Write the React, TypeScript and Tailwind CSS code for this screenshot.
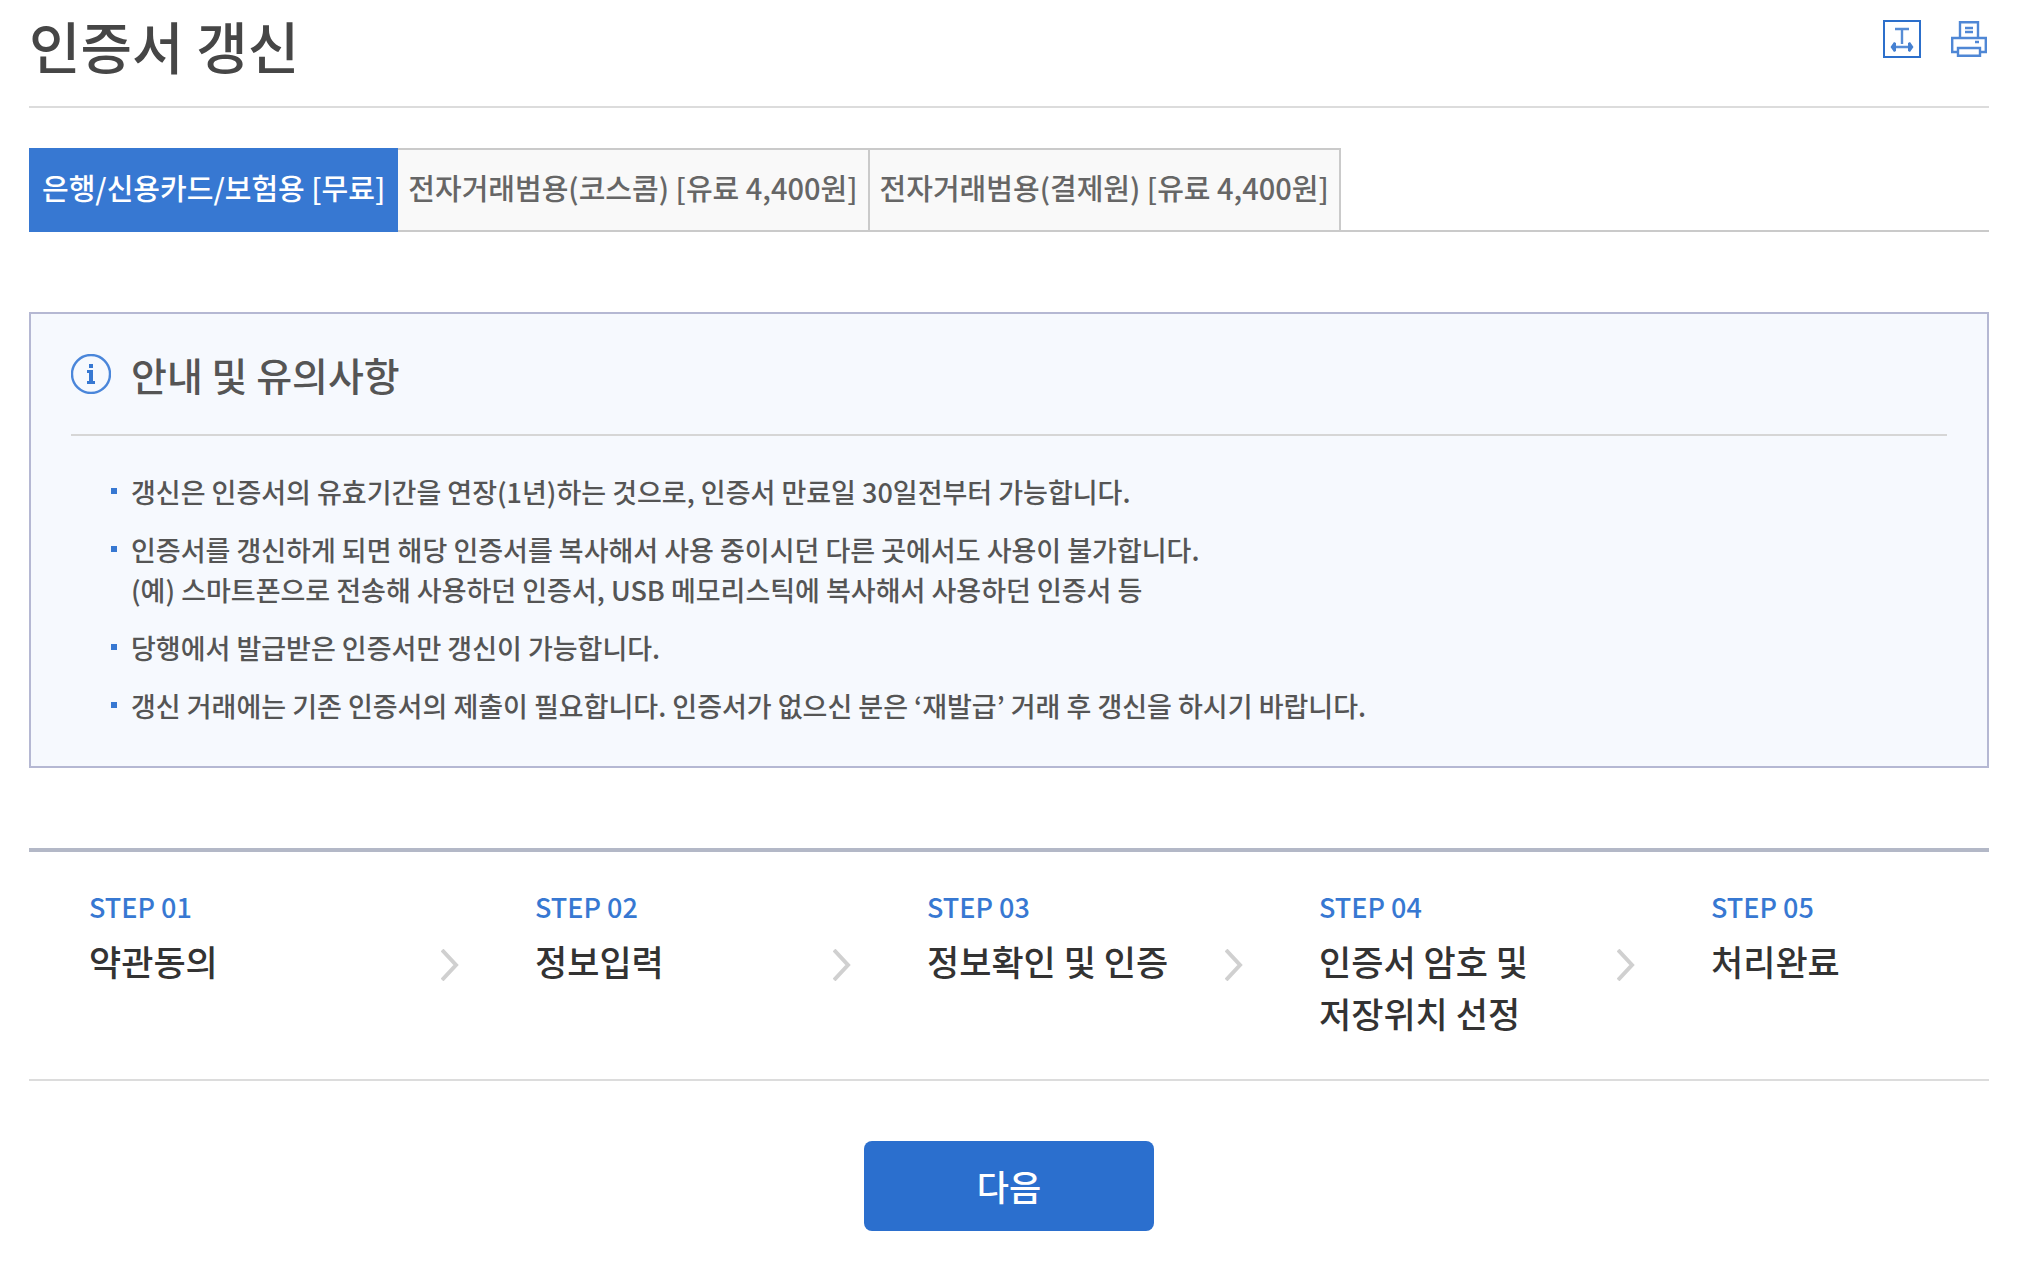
import {useState} from 'react';
import clsx from 'clsx';

const tabs = [
  '은행/신용카드/보험용 [무료]',
  '전자거래범용(코스콤) [유료 4,400원]',
  '전자거래범용(결제원) [유료 4,400원]',
];

const notices = [
  ['갱신은 인증서의 유효기간을 연장(1년)하는 것으로, 인증서 만료일 30일전부터 가능합니다.'],
  [
    '인증서를 갱신하게 되면 해당 인증서를 복사해서 사용 중이시던 다른 곳에서도 사용이 불가합니다.',
    '(예) 스마트폰으로 전송해 사용하던 인증서, USB 메모리스틱에 복사해서 사용하던 인증서 등',
  ],
  ['당행에서 발급받은 인증서만 갱신이 가능합니다.'],
  ['갱신 거래에는 기존 인증서의 제출이 필요합니다. 인증서가 없으신 분은 ‘재발급’ 거래 후 갱신을 하시기 바랍니다.'],
];

const steps = [
  {label: 'STEP 01', title: ['약관동의']},
  {label: 'STEP 02', title: ['정보입력']},
  {label: 'STEP 03', title: ['정보확인 및 인증']},
  {label: 'STEP 04', title: ['인증서 암호 및', '저장위치 선정']},
  {label: 'STEP 05', title: ['처리완료']},
];

const TextSizeIcon = () => (
  <svg width="38" height="38" viewBox="0 0 38 38" fill="none" stroke="#2c6fcb" aria-hidden="true">
    <rect x="1" y="1" width="36" height="36" strokeWidth="2" />
    <path d="M12 9h14M19 9v15M11 27h16" strokeWidth="2.4" opacity=".8" />
    <path d="M7.5 27l3.5-5 2 1v8l-2 1zM30.5 27l-3.5-5-2 1v8l2 1z" fill="#4580d1" stroke="none" />
  </svg>
);

const PrintIcon = () => (
  <svg width="36" height="36" viewBox="0 0 36 36" fill="none" stroke="#4f87d5" strokeWidth="2.4" aria-hidden="true">
    <path d="M9 16V1.2h18v15" />
    <path d="M6 31H1.2V17h33.6v14H30" />
    <path d="M7 27h22v7.8H7z" />
    <path d="M14 7h8M14 11h8M24 21h4" />
  </svg>
);

const InfoIcon = () => (
  <svg width="40" height="40" viewBox="0 0 40 40" aria-hidden="true">
    <circle cx="20" cy="20" r="19" fill="none" stroke="#4a86da" strokeWidth="2.4" />
    <path d="M18 10h4v4h-4zM16 16h6v11h2v3h-8v-3h2v-8h-2z" fill="#3778d2" />
  </svg>
);

const ArrowIcon = () => (
  <svg width="18" height="32" viewBox="0 0 18 32" fill="none" stroke="#d0d0d0" strokeWidth="4" className="shrink-0" aria-hidden="true">
    <path d="M1 1l14 15L1 31" />
  </svg>
);

export default function App() {
  const [active, setActive] = useState(0);

  return (
    <main className="bg-white pl-[29px] pr-[49px] pb-10 font-['Noto_Sans_CJK_KR',sans-serif] font-medium break-keep">
      <header className="flex items-start justify-between h-27 border-b-2 border-[#dcdcdc]">
        <h1 className="pt-[5px] text-[56px] leading-[80px] text-[#464646]">인증서 갱신</h1>
        <div className="flex items-center gap-[30px] pt-5 pr-0.5">
          <button type="button" aria-label="글자 크기"><TextSizeIcon /></button>
          <button type="button" aria-label="인쇄"><PrintIcon /></button>
        </div>
      </header>

      <div role="tablist" className="mt-10 flex h-21 border-b-2 border-[#cacaca]">
        {tabs.map((tab, index) => (
          <button
            key={tab}
            type="button"
            role="tab"
            aria-selected={active === index}
            onClick={() => setActive(index)}
            className={clsx(
              'h-21 border-y-2 pb-1 text-[29px] whitespace-nowrap',
              active === index
                ? 'border-[#3778d2] bg-[#3778d2] px-[13px] text-white'
                : 'border-r-2 border-[#cacaca] bg-[#f9f9f9] px-2.5 text-[#666]',
            )}
          >
            {tab}
          </button>
        ))}
      </div>

      <section className="mt-20 border-2 border-[#b5b8d3] bg-[#f6f9fe] p-10">
        <h2 className="flex items-center gap-5 h-[82px] pb-10 border-b-2 border-[#d6d6d6] text-[39px] text-[#555]">
          <InfoIcon />
          안내 및 유의사항
        </h2>
        <ul className="mt-9 ml-10 space-y-[18px] text-[27px] leading-10 text-[#555]">
          {notices.map((lines) => (
            <li key={lines[0]} className="flex gap-3.5">
              <span className="mt-4 size-1.5 shrink-0 bg-[#3778d2]" />
              <p>
                {lines.map((line) => (
                  <span key={line} className="block">{line}</span>
                ))}
              </p>
            </li>
          ))}
        </ul>
      </section>

      <ol className="mt-20 grid grid-cols-5 border-t-4 border-b-2 border-t-[#b3b8c7] border-b-[#dcdcdc] pt-[35px] pb-10">
        {steps.map((step, index) => (
          <li key={step.label} className={clsx('flex items-start', index === 0 ? 'pl-[60px]' : 'pl-5')}>
            {index > 0 && (
              <div className="mt-[62px] mr-[76px]">
                <ArrowIcon />
              </div>
            )}
            <div className="whitespace-nowrap">
              <p className="text-[27px] leading-10 text-[#3778d2]">{step.label}</p>
              <p className="mt-2 text-[35px] leading-[52px] text-[#333]">
                {step.title.map((line) => (
                  <span key={line} className="block">{line}</span>
                ))}
              </p>
            </div>
          </li>
        ))}
      </ol>

      <div className="mt-15 flex justify-center">
        <button type="button" className="h-[90px] w-[290px] rounded-lg bg-[#2b6fce] text-[35px] text-white">
          다음
        </button>
      </div>
    </main>
  );
}
